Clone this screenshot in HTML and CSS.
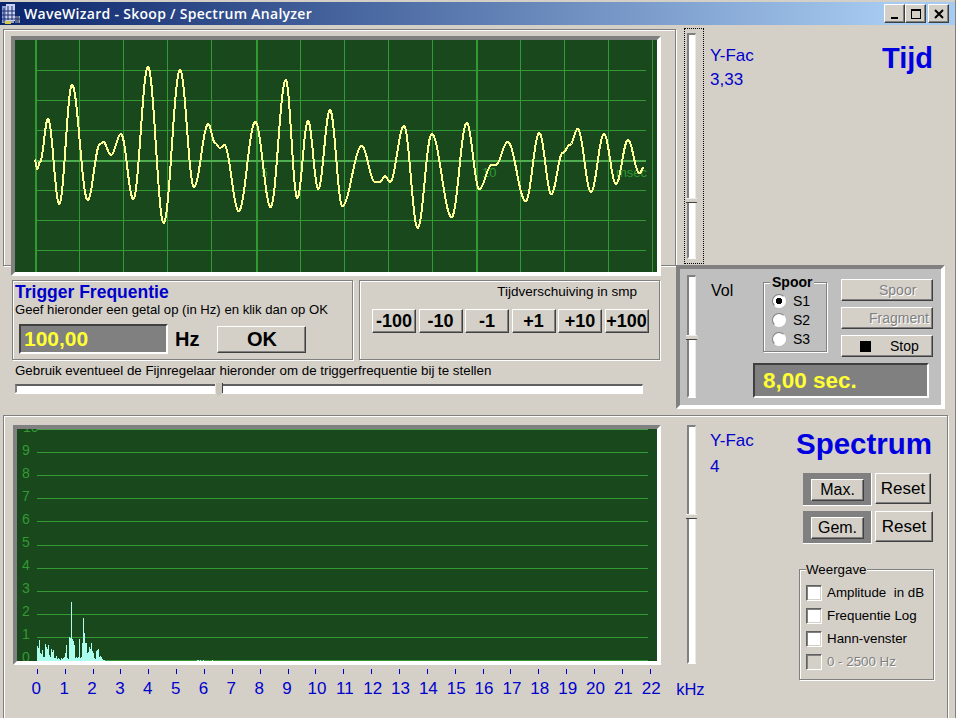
FILE: index.html
```html
<!DOCTYPE html>
<html lang="en">
<head>
    <meta charset="UTF-8">
    <title>WaveWizard - Skoop / Spectrum Analyzer</title>
    <link rel="stylesheet" href="styles.css">
</head>
<body>
    <div class="window">
        <header class="titlebar">
            <svg class="app-icon" width="18" height="20" viewBox="0 0 18 20">
                <rect x="0" y="2" width="12" height="17" fill="#8f9fd8"/>
                <rect x="4" y="0" width="9" height="17" fill="#c9d2f2"/>
                <path d="M2 4v14M6 2v14M10 2v14M0 7h13M0 11h13M0 15h13" stroke="#20306a" stroke-width="1"/>
                <rect x="13" y="12" width="5" height="7" fill="#9aa6b8"/>
                <path d="M14 12v7M16 12v7M13 15h5" stroke="#20306a"/>
                <rect x="3" y="17" width="6" height="3" fill="#d8c84a"/>
            </svg>
            <span class="title-text">WaveWizard - Skoop / Spectrum Analyzer</span>
            <div class="caption-buttons">
                <button class="caption-btn" type="button">
                    <svg width="12" height="12" viewBox="0 0 12 12"><rect x="2" y="9" width="7" height="2" fill="#000"/></svg>
                </button>
                <button class="caption-btn" type="button">
                    <svg width="12" height="12" viewBox="0 0 12 12"><path d="M1 1.5h10M1 2.5h10M1.5 2v9M10.5 2v9M1 10.5h10" stroke="#000" fill="none"/></svg>
                </button>
                <button class="caption-btn caption-close" type="button">
                    <svg width="12" height="12" viewBox="0 0 12 12"><path d="M2 2l8 8M10 2l-8 8" stroke="#000" stroke-width="2" fill="none"/></svg>
                </button>
            </div>
        </header>

        <div class="upper">
            <section class="time-pane">
                <div class="time-frame groove">
                    <div class="scope scope-time"><svg id="timeScope" width="642" height="232" viewBox="15 40 642 232"></svg></div>
                </div>

                <div class="control-row">
                    <div class="trigger-box groove">
                        <h2 class="trigger-title">Trigger Frequentie</h2>
                        <p class="trigger-help">Geef hieronder een getal op (in Hz) en klik dan op OK</p>
                        <div class="trigger-input">
                            <div class="readout readout-freq">100,00</div>
                            <span class="unit">Hz</span>
                            <button class="btn btn-ok" type="button">OK</button>
                        </div>
                    </div>
                    <div class="shift-box groove">
                        <p class="shift-label">Tijdverschuiving in smp</p>
                        <div class="shift-buttons">
                            <button class="btn btn-shift" type="button">-100</button>
                            <button class="btn btn-shift" type="button">-10</button>
                            <button class="btn btn-shift" type="button">-1</button>
                            <button class="btn btn-shift" type="button">+1</button>
                            <button class="btn btn-shift" type="button">+10</button>
                            <button class="btn btn-shift" type="button">+100</button>
                        </div>
                    </div>
                </div>

                <p class="fine-label">Gebruik eventueel de Fijnregelaar hieronder om de triggerfrequentie bij te stellen</p>
                <div class="hslider"><div class="hslider-thumb"></div></div>
            </section>

            <aside class="side-pane">
                <div class="side-top">
                    <div class="focus-box">
                        <div class="vslider vslider-yfac"><div class="vslider-thumb"></div></div>
                    </div>
                    <div class="yfac yfac-time">
                        <div>Y-Fac</div>
                        <div>3,33</div>
                    </div>
                    <div class="heading-tijd">Tijd</div>
                </div>

                <div class="vol-panel">
                    <div class="vslider vslider-vol"><div class="vslider-thumb"></div></div>
                    <div class="vol-label">Vol</div>
                    <div class="vol-body">
                        <div class="vol-top">
                            <fieldset class="spoor-box">
                                <legend>Spoor</legend>
                                <label class="radio-row"><input type="radio" name="spoor" checked> S1</label>
                                <label class="radio-row"><input type="radio" name="spoor"> S2</label>
                                <label class="radio-row"><input type="radio" name="spoor"> S3</label>
                            </fieldset>
                            <div class="play-buttons">
                                <button class="btn btn-play btn-disabled btn-spoor" type="button" disabled>Spoor</button>
                                <button class="btn btn-play btn-disabled btn-fragment" type="button" disabled>Fragment</button>
                                <button class="btn btn-play btn-stop" type="button"><span class="stop-square"></span>Stop</button>
                            </div>
                        </div>
                        <div class="readout readout-time">8,00 sec.</div>
                    </div>
                </div>
            </aside>
        </div>

        <section class="lower groove">
            <div class="spectrum-pane">
                <div class="scope scope-spectrum"><svg id="spectrumScope" width="640" height="232" viewBox="17 429 640 232"></svg></div>
                <div class="axis" id="axis"></div>
            </div>

            <div class="vslider vslider-spectrum"><div class="vslider-thumb"></div></div>
            <div class="yfac yfac-spectrum">
                <div>Y-Fac</div>
                <div>4</div>
            </div>

            <div class="spectrum-side">
                <div class="heading-spectrum">Spectrum</div>
                <div class="hold-row">
                    <div class="hold-frame"><button class="btn btn-hold" type="button">Max.</button></div>
                    <button class="btn btn-reset" type="button">Reset</button>
                </div>
                <div class="hold-row hold-row-second">
                    <div class="hold-frame"><button class="btn btn-hold" type="button">Gem.</button></div>
                    <button class="btn btn-reset btn-reset-wide" type="button">Reset</button>
                </div>
                <fieldset class="view-box">
                    <legend>Weergave</legend>
                    <label class="check-row"><input type="checkbox"> Amplitude&nbsp; in dB</label>
                    <label class="check-row"><input type="checkbox"> Frequentie Log</label>
                    <label class="check-row"><input type="checkbox"> Hann-venster</label>
                    <label class="check-row check-disabled"><input type="checkbox" disabled> 0 - 2500 Hz</label>
                </fieldset>
            </div>
        </section>
    </div>

    <script src="script.js"></script>
</body>
</html>
```

FILE: styles.css
```css
/* General Styles */
* {
    margin: 0;
    padding: 0;
    box-sizing: border-box;
}

body {
    font-family: 'Liberation Sans', Arial, sans-serif;
    font-size: 13.33px;
    background-color: #d4d0c8;
    color: #000;
}

.window {
    width: 956px;
    height: 718px;
    overflow: hidden;
    background: #d4d0c8;
    border-right: 1px solid #808080;
}

.groove {
    border: 1px solid #808080;
    box-shadow: inset 1px 1px 0 #fff, 1px 1px 0 #fff;
}

/* Title bar */
.titlebar {
    display: flex;
    align-items: center;
    height: 23px;
    margin-top: 2px;
    padding-left: 2px;
    background: linear-gradient(to right, #0a246a, #a6caf0 93%);
    color: #fff;
}

.app-icon {
    flex: none;
}

.title-text {
    margin-left: 4px;
    font-family: 'Open Sans', sans-serif;
    font-weight: 600;
    font-size: 14px;
    letter-spacing: 0.29px;
    white-space: nowrap;
}

.caption-buttons {
    display: flex;
    margin-left: auto;
    margin-right: 6px;
}

.caption-btn {
    display: flex;
    align-items: center;
    justify-content: center;
    width: 21px;
    height: 19px;
    background: #d4d0c8;
    border: 1px solid;
    border-color: #fff #404040 #404040 #fff;
    box-shadow: inset -1px -1px 0 #808080;
}

.caption-close {
    margin-left: 2px;
}

/* Top half */
.upper {
    display: flex;
    height: 390px;
    padding-left: 3px;
}

.time-pane {
    width: 673px;
    flex: none;
}

.time-frame {
    height: 237px;
    margin-top: 4px;
    padding: 6px 0 0 7px;
}

.scope {
    background: #18481c;
    border: 4px solid;
    border-color: #808080 #fff #fff #808080;
}

.scope svg {
    display: block;
    shape-rendering: crispEdges;
}

.scope-time {
    width: 650px;
    height: 240px;
}

.control-row {
    display: flex;
    margin: 14px 0 0 9px;
}

.trigger-box {
    width: 341px;
    height: 80px;
    padding: 3px 0 0 2px;
}

.trigger-title {
    font-size: 17.5px;
    line-height: 17px;
    color: #0000cc;
}

.trigger-help {
    font-size: 13.13px;
    line-height: 16px;
    margin-top: 1px;
}

.trigger-input {
    display: flex;
    align-items: center;
    margin: 6px 0 0 4px;
}

.readout {
    background: #808080;
    color: #ffff33;
    font-weight: bold;
    border: 2px solid;
    border-color: #404040 #fff #fff #404040;
}

.readout-freq {
    width: 149px;
    height: 30px;
    padding-left: 3px;
    font-size: 21px;
    line-height: 26px;
}

.unit {
    margin-left: 7px;
    font-size: 20px;
    font-weight: bold;
}

/* Buttons */
.btn {
    background: #d4d0c8;
    border: 1px solid;
    border-color: #fff #404040 #404040 #fff;
    box-shadow: inset -1px -1px 0 #808080;
    font-family: inherit;
    font-size: 14px;
    color: #000;
}

.btn-ok {
    width: 89px;
    height: 27px;
    margin-left: 18px;
    font-size: 20px;
    font-weight: bold;
}

.shift-box {
    width: 301px;
    height: 80px;
    margin-left: 6px;
}

.shift-label {
    margin-top: 3px;
    padding-right: 22px;
    font-size: 13.5px;
    line-height: 16px;
    text-align: right;
}

.shift-buttons {
    display: flex;
    gap: 2.5px;
    margin: 9px 0 0 12px;
}

.btn-shift {
    flex: none;
    width: 44px;
    height: 24px;
    font-size: 18px;
    font-weight: bold;
    padding: 0;
}

.fine-label {
    margin: 3px 0 0 12px;
    line-height: 15px;
}

.hslider {
    position: relative;
    width: 628px;
    height: 9px;
    margin: 6px 0 0 12px;
    background: #fff;
    border: 1px solid #fff;
    border-top: 2px solid #606060;
    border-left: 2px solid #808080;
    box-shadow: 0 1px 0 #fff;
}

.hslider-thumb {
    position: absolute;
    left: 198px;
    top: -3px;
    width: 8px;
    height: 13px;
    background: #c8c4bc;
    border-left: 1px solid #e8e4dc;
    border-right: 1px solid #404040;
    clip-path: polygon(0 0, 100% 0, 100% 75%, 50% 100%, 0 75%);
}

/* Vertical sliders */
.vslider {
    position: relative;
    flex: none;
    width: 9px;
    background: #fff;
    border: 2px solid;
    border-color: #808080 #ece9e2 #fff #808080;
    border-right-width: 1px;
}

.vslider-thumb {
    position: absolute;
    left: -3px;
    width: 13px;
    height: 5px;
    background: #d4d0c8;
    border-top: 1px solid #f0f0f0;
    border-bottom: 1px solid #404040;
    clip-path: polygon(0 0, 80% 0, 100% 50%, 80% 100%, 0 100%);
}

.vslider-yfac .vslider-thumb {
    top: 163px;
}

.vslider-vol .vslider-thumb {
    top: 58px;
}

.vslider-spectrum .vslider-thumb {
    top: 87px;
}

/* Right of the scope */
.side-pane {
    flex: none;
    width: 279px;
}

.side-top {
    display: flex;
    height: 240px;
}

.focus-box {
    width: 20px;
    height: 236px;
    margin: 3px 0 0 8px;
    padding: 4px 0 0 2px;
    border: 1px dotted #000;
}

.vslider-yfac {
    height: 226px;
}

.yfac {
    font-size: 17px;
    color: #0000cc;
}

.yfac-time {
    margin: 19px 0 0 6px;
    line-height: 24px;
}

.heading-tijd {
    margin: 17px 22px 0 auto;
    font-size: 29px;
    line-height: 32px;
    font-weight: bold;
    color: #0000e0;
}

.vol-panel {
    display: flex;
    width: 269px;
    height: 144px;
    padding-left: 7px;
    background: #bfbfbf;
    border: 4px solid;
    border-color: #808080 #fff #fff #808080;
}

.vslider-vol {
    height: 123px;
    margin-top: 6px;
}

.vol-label {
    width: 25px;
    margin: 14px 0 0 15px;
    font-size: 16px;
    line-height: 16px;
}

.vol-body {
    width: 176px;
    margin: 6px 0 0 17px;
}

.vol-top {
    display: flex;
    height: 88px;
}

.spoor-box {
    flex: none;
    width: 64px;
    height: 77px;
    margin-left: 10px;
    padding: 2px 0 0 8px;
    border: 1px solid #808080;
    box-shadow: inset 1px 1px 0 #fff, 1px 1px 0 #fff;
}

.spoor-box legend {
    margin-left: -2px;
    padding: 0 2px;
    background: #bfbfbf;
    font-size: 14px;
    font-weight: bold;
    line-height: 14px;
}

.radio-row {
    display: flex;
    align-items: center;
    gap: 7px;
    height: 19px;
    font-size: 14px;
}

input[type="radio"] {
    appearance: none;
    flex: none;
    width: 14px;
    height: 14px;
    background: #fff;
    border: 1px solid;
    border-color: #808080 #fff #fff #808080;
    border-radius: 50%;
}

input[type="radio"]:checked {
    background: radial-gradient(circle, #000 0, #000 3px, #fff 3.5px);
}

.play-buttons {
    flex: none;
    display: flex;
    flex-direction: column;
    gap: 6px;
    margin: 4px 0 0 14px;
}

.btn-play {
    display: flex;
    align-items: center;
    width: 92px;
    height: 22px;
}

.btn-disabled {
    color: #808080;
    text-shadow: 1px 1px 0 #fff;
}

.btn-spoor {
    padding-left: 37px;
}

.btn-fragment {
    padding-left: 27px;
}

.btn-stop {
    padding-left: 18px;
}

.stop-square {
    width: 11px;
    height: 11px;
    margin-right: 19px;
    background: #000;
}

.readout-time {
    width: 176px;
    height: 35px;
    padding-left: 8px;
    font-size: 22.5px;
    line-height: 31px;
}

/* Bottom half */
.lower {
    display: flex;
    width: 945px;
    height: 330px;
    margin-left: 3px;
}

.spectrum-pane {
    flex: none;
    width: 672px;
    padding: 9px 0 0 9px;
}

.scope-spectrum {
    width: 648px;
    height: 240px;
}

.axis {
    display: flex;
    margin: 4px 0 0 10.4px;
    color: #0000cc;
    white-space: nowrap;
}

.axis-cell {
    flex: none;
    width: 27.87px;
    text-align: center;
}

.axis-tick {
    width: 1px;
    height: 5px;
    margin: 0 auto;
    background: #0000cc;
}

.axis-num {
    margin-top: 7px;
    padding-right: 2px;
    font-size: 17px;
    line-height: 16px;
}

.axis-num-wide {
    padding: 0 0 0 2px;
}

.axis-unit {
    margin: 12px 0 0 12px;
    font-size: 16.5px;
    line-height: 16px;
}

.vslider-spectrum {
    height: 239px;
    margin: 9px 0 0 11px;
}

.yfac-spectrum {
    margin: 12px 0 0 14px;
    line-height: 26px;
}

.spectrum-side {
    flex: none;
    width: 138px;
    margin: 0 13px 0 auto;
}

.heading-spectrum {
    margin-top: 10px;
    padding-right: 2px;
    font-size: 29.5px;
    line-height: 36px;
    font-weight: bold;
    text-align: right;
    color: #0000e0;
    white-space: nowrap;
}

.hold-row {
    display: flex;
    gap: 3px;
    margin: 11px 0 0 7px;
}

.hold-row-second {
    margin-top: 5px;
}

.hold-frame {
    width: 69px;
    height: 33px;
    padding: 6px 0 0 8px;
    background: #808080;
    border-right: 1px solid #fff;
    border-bottom: 1px solid #fff;
}

.btn-hold {
    display: block;
    width: 53px;
    height: 22px;
    padding: 0;
    font-size: 16px;
}

.btn-reset {
    width: 56px;
    height: 31px;
    padding: 0;
    font-size: 17px;
}

.btn-reset-wide {
    width: 58px;
}

.view-box {
    width: 135px;
    height: 118px;
    margin: 18px 0 0 3px;
    padding: 4px 0 0 6px;
    border: 1px solid #808080;
    box-shadow: inset 1px 1px 0 #fff, 1px 1px 0 #fff;
}

.view-box legend {
    margin-left: 0;
    background: #d4d0c8;
    line-height: 15px;
}

.check-row {
    display: flex;
    align-items: center;
    gap: 5px;
    height: 23px;
    white-space: nowrap;
}

input[type="checkbox"] {
    appearance: none;
    flex: none;
    width: 16px;
    height: 16px;
    background: #fff;
    border: 1px solid;
    border-color: #606060 #fff #fff #606060;
    box-shadow: inset 1px 1px 0 #808080, inset -1px -1px 0 #d4d0c8;
}

input[type="checkbox"]:disabled {
    background: #d4d0c8;
}

.check-disabled {
    color: #808080;
    text-shadow: 1px 1px 0 #fff;
}
```

FILE: script.js
```js
const NS = 'http://www.w3.org/2000/svg';

function add(svg, tag, attrs, text) {
    const el = document.createElementNS(NS, tag);
    for (const key in attrs) el.setAttribute(key, attrs[key]);
    if (text) el.textContent = text;
    svg.appendChild(el);
}

// peaks and valleys of the trace, filled in with a cosine between them
const wave = [
    [34.7, 160], [37.3, 169], [40, 162], [48, 119], [59.3, 204], [72, 85], [87.7, 200],
    [100, 144], [103.3, 142], [111, 155], [121, 134], [133.3, 199], [148, 67], [163.7, 223],
    [180, 70], [194, 187], [208.3, 124], [215, 143], [220, 148], [224.3, 145], [238.7, 211],
    [255.3, 122], [270.7, 207], [285.7, 80], [297.3, 198], [308, 121], [318.3, 189], [330, 110],
    [342.3, 206], [361.7, 146], [375, 182], [380, 182], [385, 176], [390, 182], [404, 126],
    [417.7, 228], [431.7, 134], [451.7, 217], [466.7, 123], [479.3, 189], [491.7, 165],
    [495.7, 165], [507.7, 142], [525.7, 201], [539.3, 133], [551.3, 194], [562.7, 153],
    [570, 145], [577.7, 129], [591, 192], [604, 134], [616, 184], [628, 140], [639.3, 173],
    [644.3, 167]
];

function drawTime() {
    const svg = document.getElementById('timeScope');

    for (let i = 0; i <= 14; i++) {
        const x = Math.round(35 + 44.1 * i);
        const thick = i % 5 === 0;
        add(svg, 'rect', { x: x, y: 40, width: thick ? 2 : 1, height: 232, fill: '#339933' });
    }
    for (let i = 0; i < 7; i++) {
        const y = 70 + 30 * i;
        add(svg, 'rect', {
            x: 35, y: y, width: 611, height: i === 3 ? 2 : 1,
            fill: i === 3 ? '#4fae4f' : '#339933'
        });
    }

    add(svg, 'text', { x: 261, y: 177, fill: '#339933', 'font-size': 12 }, '5');
    add(svg, 'text', { x: 482, y: 177, fill: '#339933', 'font-size': 13 }, '10');
    add(svg, 'text', { x: 616, y: 177, fill: '#339933', 'font-size': 13 }, 'msec');

    const points = [];
    for (let i = 0; i < wave.length - 1; i++) {
        const [x0, y0] = wave[i];
        const [x1, y1] = wave[i + 1];
        for (let x = x0; x < x1; x += 0.5) {
            const t = (x - x0) / (x1 - x0);
            points.push(x.toFixed(1) + ',' + (y0 + (y1 - y0) * (1 - Math.cos(Math.PI * t)) / 2).toFixed(1));
        }
    }
    add(svg, 'polyline', {
        points: points.join(' '), fill: 'none', stroke: '#ffff99', 'stroke-width': 2
    });
}

// bar height per pixel, starting at x = 37
const bars = [
    15, 13, 21, 8, 7, 11, 4, 4, 17, 14, 12, 16, 6, 4, 12, 9, 11, 3, 3, 5, 2, 3, 2, 1, 3, 2, 3, 4,
    8, 16, 3, 2, 24, 23, 59, 22, 20, 16, 3, 4, 3, 4, 22, 3, 4, 18, 43, 28, 18, 18, 8, 9, 14, 12,
    18, 10, 8, 3, 2, 10, 11, 12, 4, 5, 4, 2, 1, 1
];

function drawSpectrum() {
    const svg = document.getElementById('spectrumScope');

    for (let i = 0; i <= 10; i++) {
        const y = Math.round(429 + 23.1 * i);
        add(svg, 'rect', { x: 37, y: y, width: 611, height: 1, fill: i === 0 ? '#4f9f4f' : '#339933' });
        add(svg, 'text', {
            x: i === 0 ? 23 : 22, y: 432 + 23 * i, fill: '#339933', 'font-size': 14
        }, String(10 - i));
    }

    bars.forEach((h, i) => {
        add(svg, 'rect', { x: 37 + i, y: 661 - h, width: 1, height: h, fill: '#aaffee' });
    });
    [197, 198, 200, 203, 212].forEach((x) => {
        add(svg, 'rect', { x: x, y: 660, width: 1, height: 1, fill: '#aaffee' });
    });
}

function drawAxis() {
    const axis = document.getElementById('axis');
    for (let i = 0; i <= 22; i++) {
        const cell = document.createElement('div');
        cell.className = 'axis-cell';
        const numClass = i < 10 ? 'axis-num' : 'axis-num axis-num-wide';
        cell.innerHTML = '<div class="axis-tick"></div><div class="' + numClass + '">' + i + '</div>';
        axis.appendChild(cell);
    }
    const unit = document.createElement('div');
    unit.className = 'axis-unit';
    unit.textContent = 'kHz';
    axis.appendChild(unit);
}

drawTime();
drawSpectrum();
drawAxis();
```
